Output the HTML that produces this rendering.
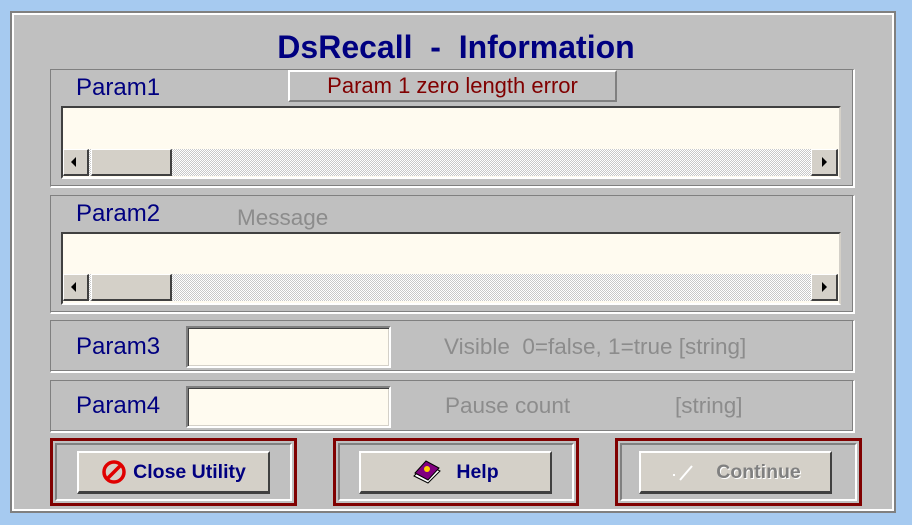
<!DOCTYPE html>
<html><head><meta charset="utf-8"><style>
*{box-sizing:border-box;margin:0;padding:0}
body{width:912px;height:525px;background:#a6caf0;position:relative;overflow:hidden;font-family:"Liberation Sans",Arial,sans-serif}
.a{position:absolute;white-space:pre}
.win{left:10px;top:11px;width:886px;height:502px;background:#c0c0c0;border:2px solid #808080;box-shadow:inset 2px 2px 0 #fff,inset -2px -2px 0 #fff}
.grp{border-top:1px solid #808080;border-left:1px solid #808080;border-right:2px solid #fff;border-bottom:2px solid #fff;box-shadow:inset -1px -1px 0 #808080}
.lbl{color:#000080;font-size:24px;line-height:28px}
.gr{color:#8c8c8c;font-size:22.5px;line-height:26px}
.ta{background:#fffbf0;border-top:2px solid #404040;border-left:2px solid #404040;border-right:2px solid #d4d0c8;border-bottom:2px solid #fff}
.inp{background:#fffbf0;border-top:2px solid #808080;border-left:2px solid #808080;border-right:2px solid #fff;border-bottom:2px solid #fff;box-shadow:inset 1px 1px 0 #404040,inset -1px -1px 0 #d4d0c8}
.track{background-color:#fff;background-image:linear-gradient(45deg,#c8c8c8 25%,transparent 25%,transparent 75%,#c8c8c8 75%),linear-gradient(45deg,#c8c8c8 25%,transparent 25%,transparent 75%,#c8c8c8 75%);background-size:2px 2px;background-position:0 0,1px 1px}
.sb{background:#d4d0c8;border-top:1px solid #fff;border-left:1px solid #fff;border-right:2px solid #404040;border-bottom:2px solid #404040}
.mar{border:3px solid #800000;background:#c0c0c0}
.mar>div{position:absolute;left:2px;top:2px;right:2px;bottom:2px;border-top:2px solid #808080;border-left:2px solid #808080;border-right:2px solid #fff;border-bottom:2px solid #fff}
.btn{background:#d4d0c8;border-top:2px solid #fff;border-left:2px solid #fff;border-right:2px solid #404040;border-bottom:3px solid #404040;display:flex;align-items:center;justify-content:center;font-weight:bold;font-size:19.5px;color:#000080}
</style></head><body>
<div class="a win"></div>
<div class="a" style="left:0;width:912px;text-align:center;top:28px;font-size:32px;line-height:38px;font-weight:bold;color:#000080">DsRecall  -  Information</div>

<div class="a grp" style="left:50px;top:69px;width:805px;height:119px"></div>
<div class="a lbl" style="left:76px;top:74px">Param1</div>
<div class="a" style="left:288px;top:70px;width:329px;height:32px;background:#c0c0c0;border-top:2px solid #fff;border-left:2px solid #fff;border-right:2px solid #808080;border-bottom:2px solid #808080;color:#800000;font-size:22px;text-align:center;line-height:27px">Param 1 zero length error</div>
<div class="a ta" style="left:61px;top:106px;width:780px;height:73px"></div>
<div class="a track" style="left:63px;top:149px;width:775px;height:27px"></div>
<div class="a sb" style="left:63px;top:149px;width:26px;height:27px"></div>
<div class="a" style="left:71px;top:157px;width:0;height:0;border-top:5px solid transparent;border-bottom:5px solid transparent;border-right:5px solid #000"></div>
<div class="a sb" style="left:91px;top:149px;width:81px;height:27px"></div>
<div class="a sb" style="left:811px;top:149px;width:27px;height:27px"></div>
<div class="a" style="left:822px;top:157px;width:0;height:0;border-top:5px solid transparent;border-bottom:5px solid transparent;border-left:5px solid #000"></div>

<div class="a grp" style="left:50px;top:195px;width:805px;height:119px"></div>
<div class="a lbl" style="left:76px;top:200px">Param2</div>
<div class="a gr" style="left:237px;top:205px">Message</div>
<div class="a ta" style="left:61px;top:232px;width:780px;height:73px"></div>
<div class="a track" style="left:63px;top:274px;width:775px;height:27px"></div>
<div class="a sb" style="left:63px;top:274px;width:26px;height:27px"></div>
<div class="a" style="left:71px;top:282px;width:0;height:0;border-top:5px solid transparent;border-bottom:5px solid transparent;border-right:5px solid #000"></div>
<div class="a sb" style="left:91px;top:274px;width:81px;height:27px"></div>
<div class="a sb" style="left:811px;top:274px;width:27px;height:27px"></div>
<div class="a" style="left:822px;top:282px;width:0;height:0;border-top:5px solid transparent;border-bottom:5px solid transparent;border-left:5px solid #000"></div>

<div class="a grp" style="left:50px;top:320px;width:805px;height:53px"></div>
<div class="a lbl" style="left:76px;top:333px">Param3</div>
<div class="a inp" style="left:186px;top:326px;width:205px;height:42px"></div>
<div class="a gr" style="left:444px;top:334px">Visible  0=false, 1=true [string]</div>

<div class="a grp" style="left:50px;top:380px;width:805px;height:53px"></div>
<div class="a lbl" style="left:76px;top:392px">Param4</div>
<div class="a inp" style="left:186px;top:386px;width:205px;height:42px"></div>
<div class="a gr" style="left:445px;top:393px">Pause count</div>
<div class="a gr" style="left:675px;top:393px">[string]</div>

<div class="a mar" style="left:50px;top:438px;width:247px;height:68px"><div></div></div>
<div class="a mar" style="left:333px;top:438px;width:246px;height:68px"><div></div></div>
<div class="a mar" style="left:615px;top:438px;width:247px;height:68px"><div></div></div>

<div class="a btn" style="left:77px;top:451px;width:193px;height:43px">
<svg width="26" height="26" viewBox="0 0 26 26" style="margin-right:6px"><circle cx="13" cy="13" r="10" fill="none" stroke="#e00000" stroke-width="3.5"/><line x1="6" y1="20" x2="20" y2="6" stroke="#e00000" stroke-width="3.5"/></svg>Close Utility</div>
<div class="a btn" style="left:359px;top:451px;width:193px;height:43px">
<svg width="30" height="26" viewBox="0 0 30 26" style="margin-right:14px"><path d="M2 17 L16 24 L28 12 L14 5 Z" fill="#fff" stroke="#000" stroke-width="1"/><path d="M3 14 L16 21 L27 9 L14 2 Z" fill="#800080" stroke="#000" stroke-width="1"/><circle cx="15" cy="10" r="3" fill="#ffd000"/></svg>Help</div>
<div class="a btn" style="left:639px;top:451px;width:193px;height:43px;color:#808080;text-shadow:1px 1px 0 #fff">
<svg width="30" height="24" viewBox="0 0 30 24" style="margin-right:16px"><line x1="10" y1="20" x2="22" y2="6" stroke="#fff" stroke-width="2"/><rect x="3" y="14" width="2" height="2" fill="#fff"/></svg>Continue</div>
</body></html>
